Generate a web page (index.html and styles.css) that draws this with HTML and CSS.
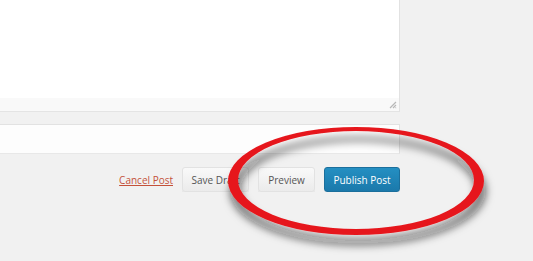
FILE: index.html
```html
<!DOCTYPE html>
<html lang="en">
<head>
    <meta charset="UTF-8">
    <meta name="viewport" content="width=device-width, initial-scale=1.0">
    <title>New Post</title>
    <link rel="stylesheet" href="styles.css">
</head>
<body>

<div class="editor">
    <div class="post-body">
        <div class="status-bar">
            <svg class="grip" width="8" height="8" viewBox="0 0 8 8">
                <path d="M7 1 L1 7 M7 4 L4 7 M7 6.5 L6.5 7" stroke="#b8b8b8" stroke-width="1.2"/>
            </svg>
        </div>
    </div>

    <div class="tags-field"></div>

    <div class="actions">
        <a href="#" class="cancel">Cancel Post</a>
        <button class="btn draft">Save Draft</button>
        <button class="btn preview">Preview</button>
        <button class="btn primary">Publish Post</button>
    </div>
</div>

<!-- red marker drawn over the screenshot -->
<svg class="marker" width="533" height="261" viewBox="0 0 533 261">
    <defs>
        <filter id="shade" x="-20%" y="-30%" width="140%" height="180%">
            <feDropShadow dx="2" dy="10" stdDeviation="4.5" flood-color="#111" flood-opacity="0.6"/>
        </filter>
    </defs>
    <path filter="url(#shade)" fill="#e6161c" fill-rule="evenodd"
          d="M228 181 A128 54 0 1 0 484 181 A128 54 0 1 0 228 181 Z
             M238 180 A118 49 0 1 0 474 180 A118 49 0 1 0 238 180 Z"/>
</svg>

</body>
</html>
```

FILE: styles.css
```css
body {
    margin: 0;
    padding: 0;
    background: #f1f1f1;
    font-family: "Open Sans", Arial, sans-serif;
    overflow: hidden;
}
.editor {
    width: 400px;
}
.post-body {
    height: 112px;
    background: #fff;
    border-right: 1px solid #e2e2e2;
    border-bottom: 1px solid #e4e4e4;
    display: flex;
    flex-direction: column;
    justify-content: flex-end;
    box-sizing: border-box;
}
.status-bar {
    height: 11px;
    background: #f9f9f9;
    display: flex;
    justify-content: flex-end;
    align-items: flex-end;
    padding: 0 2px 2px 0;
}
.tags-field {
    height: 30px;
    margin-top: 12px;
    background: #fdfdfd;
    border-top: 1px solid #e2e2e2;
    border-right: 1px solid #e2e2e2;
    border-bottom: 1px solid #e8e8e8;
    box-sizing: border-box;
}
.actions {
    display: flex;
    justify-content: flex-end;
    align-items: center;
    margin-top: 13px;
    gap: 9px;
}
.cancel {
    color: #c4513a;
    font-size: 10px;
}
.btn {
    height: 25px;
    padding: 0;
    white-space: nowrap;
    font-family: "Open Sans", Arial, sans-serif;
    font-size: 10px;
    color: #555;
    background: linear-gradient(#f9f9f9, #ebebeb);
    border: 1px solid #e2e2e2;
    border-radius: 3px;
    box-shadow: 0 1px 0 rgba(0,0,0,0.06);
}
.draft {
    width: 67px;
}
.preview {
    width: 57px;
}
.primary {
    width: 76px;
    color: #fff;
    background: linear-gradient(#248fc2, #1b79ab);
    border-color: #1b6f9c;
}
.marker {
    position: absolute;
    top: 0;
    left: 0;
    pointer-events: none;
}
```
